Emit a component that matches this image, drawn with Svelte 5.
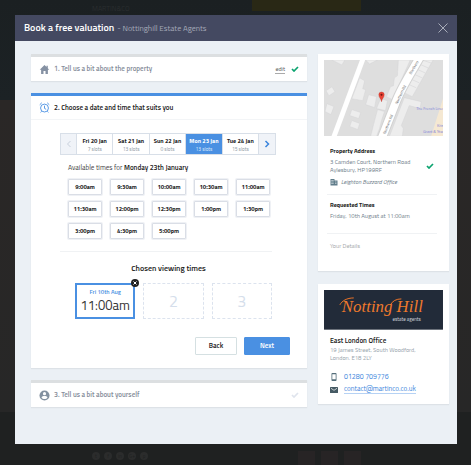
<script lang="ts">
	interface Day {
		name: string;
		slots: number;
	}

	const days: Day[] = [
		{ name: 'Fri 20 Jan', slots: 7 },
		{ name: 'Sat 21 Jan', slots: 13 },
		{ name: 'Sun 22 Jan', slots: 0 },
		{ name: 'Mon 23 Jan', slots: 13 },
		{ name: 'Tue 24 Jan', slots: 15 }
	];

	const times = [
		'9:00am', '9:30am', '10:00am', '10:30am', '11:00am',
		'11:30am', '12:00pm', '12:30pm', '1:00pm', '1:30pm',
		'3:00pm', '4:30pm', '5:00pm'
	];

	let selectedDay = $state(3);
	let chosen = $state('11:00am');
</script>

{#snippet tick()}
	<svg class="tick" viewBox="0 0 8 6"><path d="M1 3 3 5 7 1" /></svg>
{/snippet}

<div class="page">
	<div class="site-top">
		<span class="brand">MARTIN&amp;CO</span>
		<span class="banner"></span>
	</div>

	<main class="modal">
		<header class="modal-header">
			<h1>Book a free valuation</h1>
			<span class="agency">- Nottinghill Estate Agents</span>
			<button class="close" aria-label="Close">
				<svg viewBox="0 0 10 10"><path d="M.5.5l9 9M9.5.5l-9 9" /></svg>
			</button>
		</header>

		<div class="content">
			<div class="steps">
				<section class="card step">
					<div class="step-header">
						<svg class="step-icon" viewBox="0 0 12 12"><path fill="#8591a3" d="M6 1 0.8 6.2h1.5V11h2.6V7.6h2.2V11h2.6V6.2h1.5L9.6 4.6V1.8H8.2v1.4z" /></svg>
						<h2>1. Tell us a bit about the property</h2>
						<a class="edit" href="#property">edit</a>
						{@render tick()}
					</div>
				</section>

				<section class="card step current">
					<div class="step-header">
						<svg class="step-icon" viewBox="0 0 12 12" fill="none" stroke="#4a90e2">
							<circle cx="6" cy="6.6" r="4.3" />
							<path d="M6 4v3l1.8 1M.8 3 3 .9M11.2 3 9 .9M2.8 10.2l-1 1.2M9.2 10.2l1 1.2" />
						</svg>
						<h2>2. Choose a date and time that suits you</h2>
					</div>

					<div class="step-body">
						<div class="days">
							<button class="arrow" aria-label="Previous days">
								<svg viewBox="0 0 6 8"><path d="M4.5 1 1.5 4l3 3" /></svg>
							</button>
							{#each days as day, i}
								<button class="day" class:selected={i === selectedDay} onclick={() => (selectedDay = i)}>
									<strong>{day.name}</strong>
									<small>{day.slots} slots</small>
								</button>
							{/each}
							<button class="arrow next-days" aria-label="Next days">
								<svg viewBox="0 0 6 8"><path d="M1.5 1l3 3-3 3" /></svg>
							</button>
						</div>

						<div class="available">
							<p>Available times for <strong>Monday 23th January</strong></p>
							<div class="times">
								{#each times as time}
									<button onclick={() => (chosen = time)}>{time}</button>
								{/each}
							</div>
						</div>

						<h3>Chosen viewing times</h3>
						<div class="chosen">
							<div class="slot filled">
								<span class="slot-date">Fri 10th Aug</span>
								<span class="slot-time">{chosen}</span>
								<button class="remove" aria-label="Remove time">
									<svg viewBox="0 0 8 8"><path d="M2.5 2.5l3 3M5.5 2.5l-3 3" /></svg>
								</button>
							</div>
							<div class="slot">2</div>
							<div class="slot">3</div>
						</div>

						<div class="actions">
							<button class="back">Back</button>
							<button class="next">Next</button>
						</div>
					</div>
				</section>

				<section class="card step">
					<div class="step-header pending">
						<svg class="step-icon" viewBox="0 0 12 12">
							<circle cx="6" cy="6" r="5.5" fill="#8391a0" />
							<circle cx="6" cy="4" r="1.7" fill="#fff" />
							<path fill="#fff" d="M2.7 8.2C3.2 7 4.6 6.6 6 6.6s2.8.4 3.3 1.6C8.5 9.4 7.3 9.9 6 9.9s-2.500-.5-3.300-1.700z" />
						</svg>
						<h2>3. Tell us a bit about yourself</h2>
						{@render tick()}
					</div>
				</section>
			</div>

			<aside>
				<section class="card summary">
					<svg class="map" viewBox="0 0 120 77">
						<rect width="120" height="77" fill="#dedede" />
						<g fill="#ededed" stroke="#d0d2d4" stroke-width=".4">
							<path d="M8 0h13l-3 5zM42 0h12l-8 4zM2 31l6-4 3 5-6 4zM3 44l7 3-3 8-6-3zM36 18l5 3-2 8 3 1-3 11-11-2zM45 35l8 2-2 11-9-3zM28 50l9 3-2 6-9-3zM28 61l8 3-2 6-8-3zM75 0h12L69 40l-6-3 4-10 3-1 1-8 3-2zM57 39l7 2-2 10-9-2zM54 50l7 2-3 9-2 8-3 8h-6l3-12z" />
							<path d="M81 38l17 4-1 7-11-3-8 20 2 3-1 8H66zM98 0h12L89 37l-8-4z" />
						</g>
						<path d="M108 3l-9-3M105 8l-9-4M102 13l-9-4M99 18l-9-4M96 23l-9-4M93 28l-9-4" stroke="#d4d5d6" stroke-width=".6" />
						<path d="M120 39 108 77h12z" fill="#f5e8d2" />
						<path d="M40-3 9 80" stroke="#fff" stroke-width="5" />
						<path d="M98-5C87 14 78 28 73 41L57 82" fill="none" stroke="#d2d2d2" stroke-width="10" />
						<path d="M98-5C87 14 78 28 73 41L57 82" fill="none" stroke="#fff" stroke-width="8" />
						<g class="roads">
							<text transform="translate(88 15) rotate(-60)">Northern</text>
							<text transform="translate(74 45) rotate(-65)">Northern Rd</text>
							<text transform="translate(62 75) rotate(-68)">Northern Rd</text>
						</g>
						<g class="places">
							<text x="93" y="50">The French Linen</text>
							<text x="114" y="68">Kits</text>
							<text x="100" y="74">Grant &amp; Stor</text>
						</g>
						<path d="M58 42c-.3-3-2.700-4.200-2.700-7a2.700 2.700 0 0 1 5.400 0c0 2.800-2.400 4-2.700 7z" fill="#ea4335" stroke="#b93228" stroke-width=".4" />
						<circle cx="58" cy="35" r="1" fill="#6d1610" />
					</svg>

					<div class="group">
						<h4>Property Address</h4>
						<div class="with-tick">
							<address>3 Camden Court, Northern Road<br />Aylesbury, HP199RF</address>
							{@render tick()}
						</div>
						<p class="office">
							<svg viewBox="0 0 8 8"><path fill="#607d8b" d="M.5 1h4v1.500h3V7.500h-7z" /><path stroke="#fff" stroke-width=".5" d="M1.200 2.500h2.500M1.200 4h2.500M1.200 5.500h2.500M5 4h1.500M5 5.500h1.500" /></svg>
							<em>Leighton Buzzard Office</em>
						</p>
					</div>
					<div class="group requested">
						<h4>Requested Times</h4>
						<p>Friday, 10th August at 11:00am</p>
					</div>
					<div class="group upcoming">
						<p>Your Details</p>
					</div>
				</section>

				<section class="card contact">
					<svg class="logo" viewBox="0 0 120 40">
						<rect width="120" height="40" fill="#222b39" />
						<path d="M16 15c2-4 7-7 14-7M67 15c2-4 6-6 11-6" />
						<text class="logo-name" x="18" y="22">Notting Hill</text>
						<text class="logo-sub" x="69" y="31">estate agents</text>
					</svg>
					<div class="details">
						<h4>East London Office</h4>
						<address>19 James Street, South Woodford,<br />London. E18 2LY</address>
						<p class="line">
							<svg viewBox="0 0 8 8"><path fill="#546e7a" fill-rule="evenodd" d="M2.300 0h3.400q.8 0 .8.800v6.400q0 .8-.8.8H2.300q-.8 0-.8-.8V.8q0-.8.8-.8zM2.300 1.300v5h3.400v-5z" /></svg>
							<a href="tel:01280709776">01280 709776</a>
						</p>
						<p class="line">
							<svg viewBox="0 0 8 8"><rect y="1" width="8" height="6" rx=".6" fill="#455a64" /><path d="M1 2.300l3 2 3-2" fill="none" stroke="#fff" stroke-width=".7" /></svg>
							<a class="mail" href="mailto:contact@martinco.co.uk">contact@martinco.co.uk</a>
						</p>
					</div>
				</section>
			</aside>
		</div>
	</main>

	<footer class="site-footer">
		<div class="social">
			{#each ['t', 'f', 'in', 'G+', 'p'] as network}
				<span>{network}</span>
			{/each}
		</div>
		<div class="badges">
			<span></span>
			<span></span>
			<span></span>
		</div>
	</footer>
</div>

<style>
	:global(body) {
		margin: 0;
		background: #1f2121;
	}

	.page {
		min-height: 100vh;
		display: flex;
		flex-direction: column;
		font-family: 'Titillium Web', Roboto, sans-serif;
		font-size: 6px;
		line-height: 8px;
		color: #222;
		background: linear-gradient(#1b2022 0, #1c2225 100px, #2a2726 100px, #272727 412px, #1f2121 412px);

		& *,
		& *::before {
			box-sizing: border-box;
		}
	}

	h1, h2, h3, h4, p {
		margin: 0;
		font-size: inherit;
	}

	address {
		font-style: normal;
	}

	button {
		padding: 0;
		font: inherit;
		color: inherit;
		background: #fff;
		border: 1px solid #dadee6;
		cursor: pointer;
	}

	svg {
		display: block;
		flex: none;
	}

	a {
		color: #3b85dc;
		text-decoration: none;
	}

	.site-top {
		height: 15px;
		display: flex;
		padding-left: 92px;

		& .brand {
			width: 160px;
			padding-top: 5px;
			font-size: 7px;
			color: #2a2e2f;
		}

		& .banner {
			width: 109px;
			height: 11px;
			background: #292815;
		}
	}

	.modal {
		margin: 0 14px 0 15px;
		background: #ebf0f5;
	}

	.modal-header {
		height: 26px;
		padding: 0 9px;
		display: flex;
		align-items: center;
		color: #fff;
		background: #444961;

		& h1 {
			font-size: 10px;
			font-weight: 600;
		}

		& .agency {
			margin-left: 3px;
			font-size: 8px;
			color: #a5a9b8;
		}
	}

	.close {
		width: 10px;
		height: 10px;
		margin-left: auto;
		background: none;
		border: none;

		& path {
			stroke: #c3c6d0;
			stroke-width: 0.8;
		}
	}

	.content {
		display: grid;
		grid-template-columns: minmax(0, 276fr) minmax(0, 131fr);
		gap: 11px;
		align-items: start;
		padding: 13px 8px 37px 16px;
	}

	.steps {
		display: grid;
		gap: 12px;
	}

	aside {
		display: grid;
		gap: 13px;
	}

	.card {
		background: #fff;
		box-shadow: 0 1px 1px #dde2e7;
	}

	.step {
		border-top: 3px solid #dcdfe1;
	}

	.step.current {
		border-color: #4a90e2;
	}

	.step-header {
		height: 24px;
		padding: 0 8px;
		display: flex;
		align-items: center;
		gap: 4px;
		color: #858c99;

		& h2 {
			font-size: 7px;
			font-weight: 600;
		}

		& .edit {
			margin-left: auto;
			margin-right: 2px;
			color: #555;
			border-bottom: 1px solid #aaa;
		}
	}

	.current .step-header {
		color: #222;
		border-bottom: 1px solid #f3f5f7;
	}

	.step-icon {
		width: 11px;
		height: 11px;
	}

	.tick {
		width: 8px;
		height: 6px;
		margin-left: auto;
		fill: none;
		stroke: #0ba36f;
		stroke-width: 1.7;
	}

	.edit + .tick {
		margin-left: 0;
	}

	.pending .tick {
		stroke: #dfe4ed;
	}

	.step-body {
		padding: 13px 17px 13px 29px;
	}

	.days {
		height: 22px;
		margin-right: 14px;
		display: flex;
		border: 1px solid #d8dfe8;

		& button {
			border: none;
			border-right: 1px solid #d8dfe8;
		}

		& .day {
			flex: 1;
		}

		& .selected {
			color: #fff;
			background: #4a90e2;
		}

		& .next-days {
			border: none;

			& path {
				stroke: #3b85dc;
				stroke-width: 1.5;
			}
		}

		& strong {
			display: block;
			line-height: 9px;
			font-weight: 700;
		}

		& small {
			display: block;
			font-size: 5px;
			line-height: 8px;
			color: #8f9aa5;
		}

		& .selected small {
			color: #dbe9fb;
		}
	}

	.arrow {
		width: 16px;
		display: grid;
		place-items: center;
		background: #f0f3f8;

		& svg {
			width: 6px;
			height: 8px;
			fill: none;
			stroke: #c8d0dc;
		}
	}

	.available {
		margin-right: 18px;
		padding: 8px 0 12px 8px;
		border-bottom: 1px solid #f0f2f4;

		& p {
			font-size: 7px;
			line-height: 10px;
			color: #444;
		}

		& strong {
			font-weight: 600;
			color: #222;
		}
	}

	.times {
		margin: 6px 2px 0 0;
		display: grid;
		grid-template-columns: repeat(5, 1fr);
		gap: 6px 8px;

		& button {
			height: 16px;
			font-weight: 700;
			border-radius: 1px;
			box-shadow: 0 0 0 1px #eff1f5;
		}
	}

	h3 {
		margin: 11px 13px 10px 0;
		font-size: 8px;
		line-height: 10px;
		font-weight: 600;
		text-align: center;
	}

	.chosen {
		margin: 0 18px 0 15px;
		display: grid;
		grid-template-columns: repeat(3, 1fr);
		gap: 8px;
	}

	.slot {
		position: relative;
		height: 36px;
		display: flex;
		flex-direction: column;
		align-items: center;
		justify-content: center;
		font-size: 16px;
		color: #d5deeb;
		border: 1px dashed #dce3ee;
	}

	.slot.filled {
		padding-bottom: 2px;
		border: 2px solid #4a90e2;
	}

	.slot-date {
		font-size: 6px;
		line-height: 9px;
		font-weight: 600;
		color: #4a90e2;
	}

	.slot-time {
		font-size: 13px;
		line-height: 18px;
		color: #333;
	}

	.remove {
		position: absolute;
		top: -6px;
		right: -6px;
		width: 8px;
		height: 8px;
		border: none;
		border-radius: 50%;
		background: #222;

		& path {
			stroke: #fff;
		}
	}

	.actions {
		margin-top: 18px;
		display: flex;
		justify-content: flex-end;
		gap: 7px;

		& button {
			width: 42px;
			height: 18px;
			font-size: 7px;
			font-weight: 600;
			border-color: #d5e0e2;
			border-radius: 1px;
		}

		& .next {
			width: 46px;
			color: #fff;
			background: #4a90e2;
			border-color: #4a90e2;
		}
	}

	.summary,
	.contact {
		padding: 6px;
	}

	.map,
	.logo {
		width: 100%;
		height: auto;
	}

	.roads {
		font-size: 4px;
		fill: #666;
	}

	.places {
		font-size: 4px;
		fill: #7a7ad8;
	}

	.group {
		margin: 0 6px 0 3px;
		padding: 6px 3px 8px;
		color: #6f808b;

		& + & {
			border-top: 1px solid #f0f2f4;
		}

		& h4 {
			margin-bottom: 3px;
			font-weight: 700;
			color: #222;
		}
	}

	.map + .group {
		padding-top: 11px;
	}

	.with-tick {
		display: flex;
		align-items: center;
	}

	.office {
		margin-top: 4px;
		display: flex;
		align-items: center;
		gap: 3px;

		& svg {
			width: 8px;
			height: 8px;
		}
	}

	.group.requested {
		padding-bottom: 13px;
	}

	.group.upcoming {
		padding-top: 8px;
		padding-bottom: 15px;
		color: #a5a8aa;
	}

	.logo path {
		fill: none;
		stroke: #ee7428;
	}

	.logo-name {
		font-family: 'Liberation Serif', serif;
		font-size: 17px;
		font-style: italic;
		fill: #f07a2c;
	}

	.logo-sub {
		font-size: 5px;
		fill: #d4d8df;
	}

	.details {
		padding: 6px 6px 4px;

		& h4 {
			font-size: 7px;
			line-height: 10px;
			font-weight: 600;
		}

		& address {
			margin-bottom: 11px;
			color: #96a3ab;
		}
	}

	.line {
		margin-top: 4px;
		display: flex;
		align-items: center;
		gap: 6px;
		font-size: 7px;

		& svg {
			width: 8px;
			height: 8px;
		}
	}

	.mail {
		border-bottom: 1px solid #b6d2f4;
	}

	.site-footer {
		flex: 1;
		display: flex;
		justify-content: space-between;
		padding: 7px 110px 0 92px;
		overflow: hidden;
	}

	.social {
		display: flex;
		gap: 4px;
		padding-top: 1px;

		& span {
			width: 8px;
			height: 8px;
			font-size: 5px;
			text-align: center;
			color: #1f2121;
			background: #2b2c2c;
			border-radius: 50%;
		}
	}

	.badges {
		display: flex;
		gap: 6px;

		& span {
			width: 17px;
			height: 14px;
			background: #272425;
		}
	}
</style>
